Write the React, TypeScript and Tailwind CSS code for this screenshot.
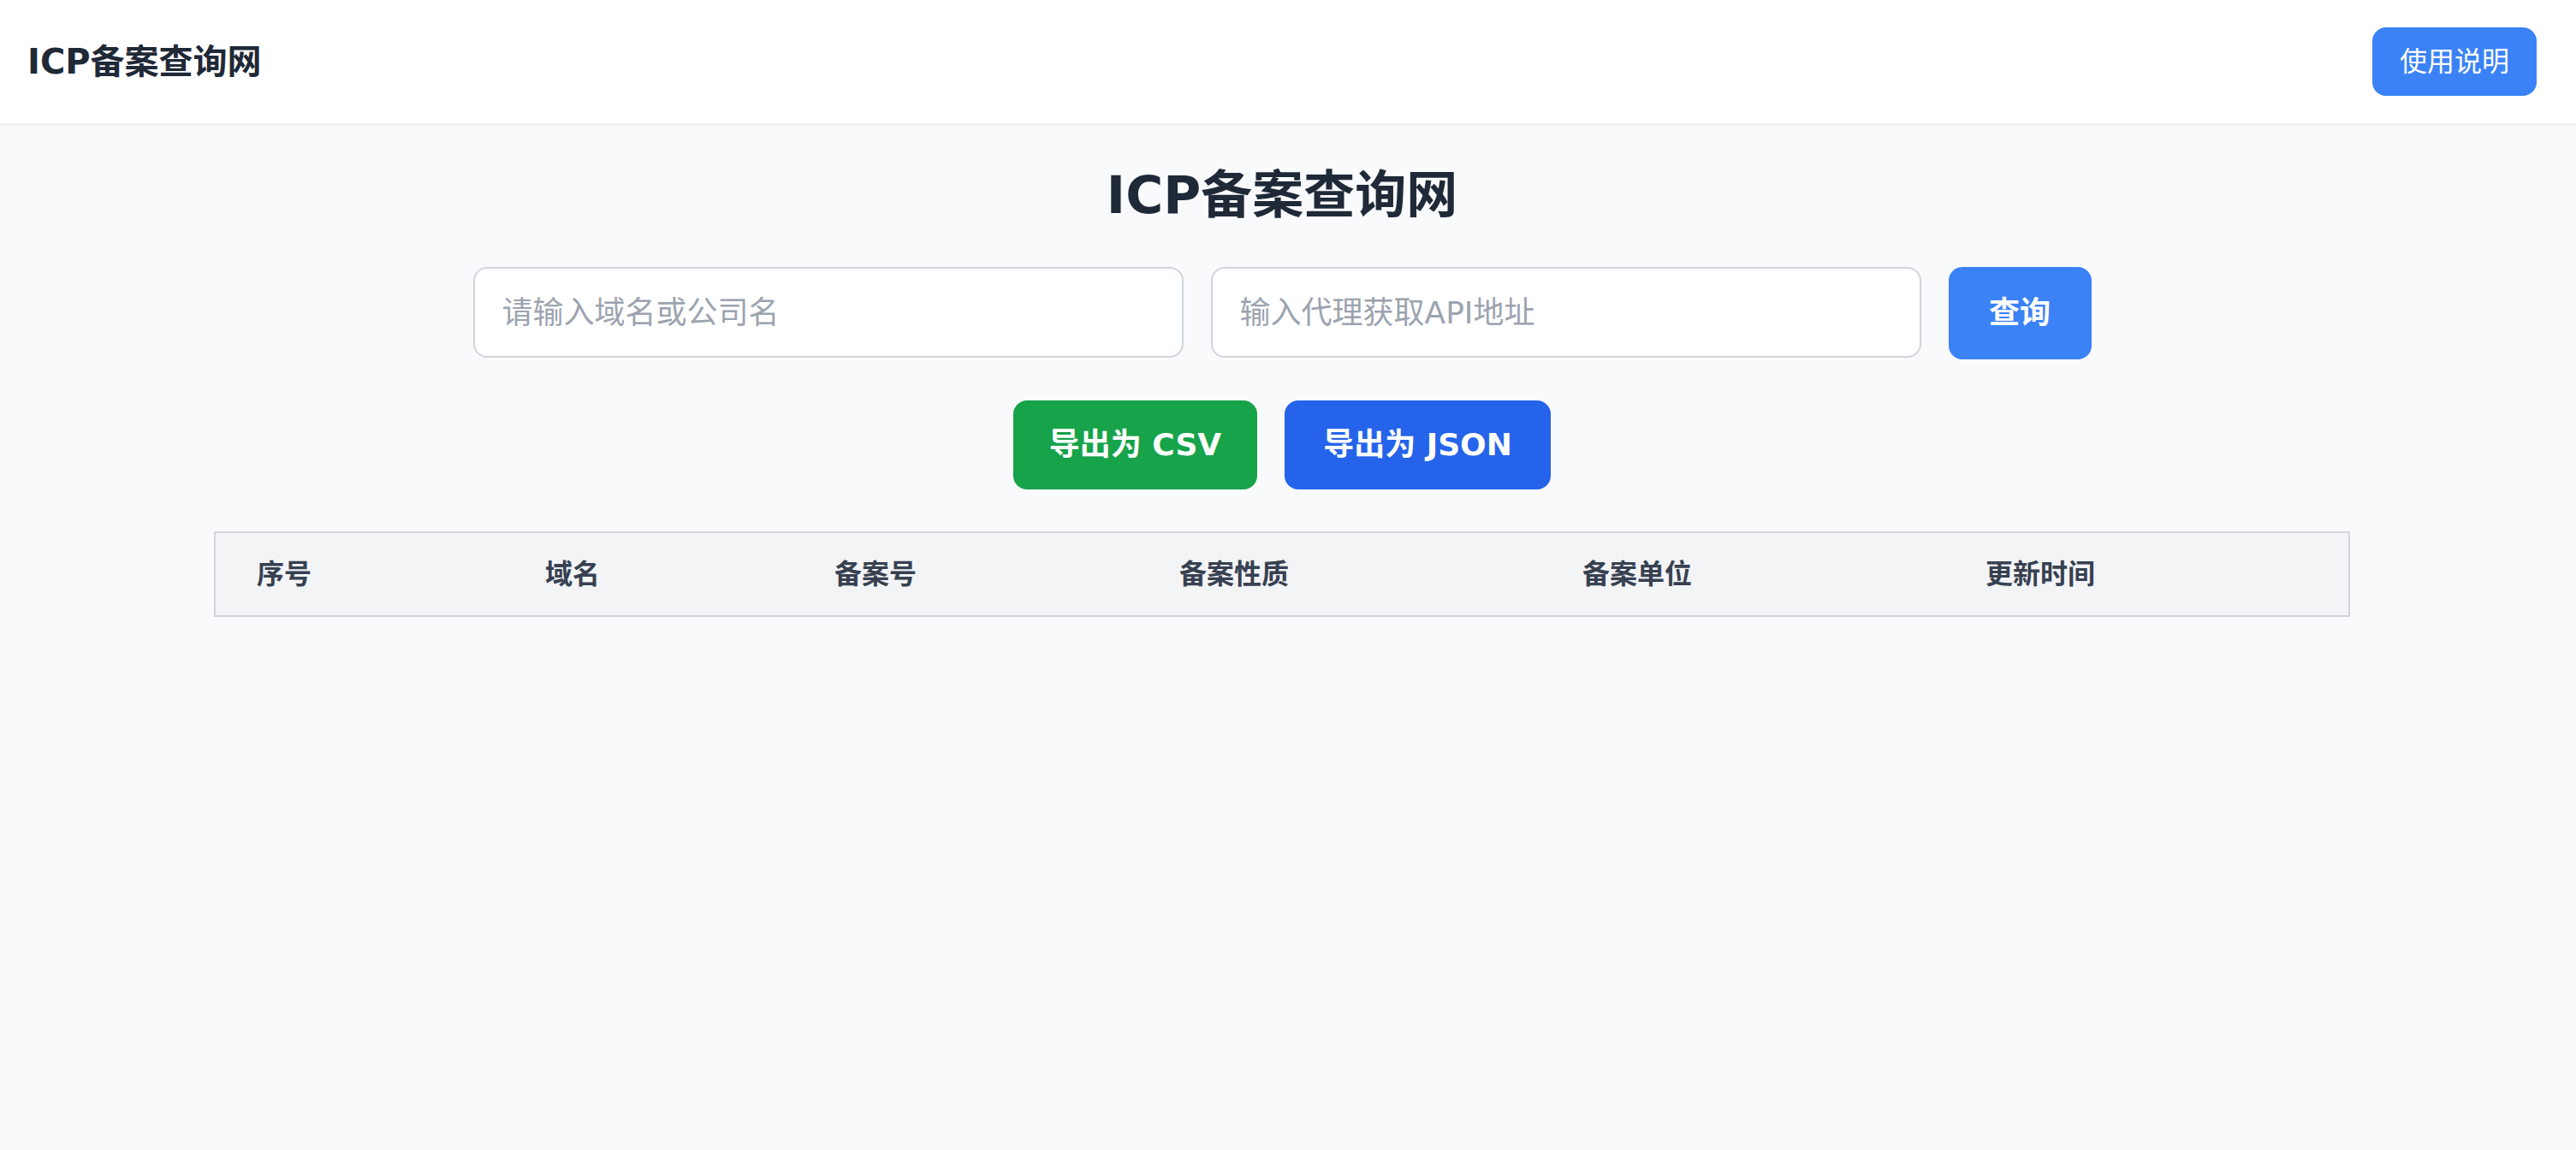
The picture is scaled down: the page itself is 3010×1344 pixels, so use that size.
import React from "react";

const FONT = { fontFamily: '"DejaVu Sans", "Noto Sans CJK SC", sans-serif' };

export default function App() {
  const cols = [
    { label: "序号", w: "w-[338px]" },
    { label: "域名", w: "w-[338px]" },
    { label: "备案号", w: "w-[403px]" },
    { label: "备案性质", w: "w-[471px]" },
    { label: "备案单位", w: "w-[471px]" },
    { label: "更新时间", w: "w-[473px]" },
  ];
  return (
    <div className="min-h-[1344px] bg-[#f9fafb]" style={FONT}>
      <header className="flex h-[144px] items-center justify-between bg-white pl-[32px] pr-[46px] shadow-[0_2px_4px_rgba(0,0,0,0.05)]">
        <h1 className="text-[40px] font-bold leading-[56px] text-[#1f2937]">ICP备案查询网</h1>
        <button className="h-[80px] rounded-[16px] bg-[#3b82f6] px-[32px] text-[32px] leading-[48px] text-white">
          使用说明
        </button>
      </header>
      <main className="pr-[14px]">
        <div className="mx-auto max-w-[2560px] px-[32px] pt-[48px]">
          <h2 className="mb-[48px] text-center text-[60px] font-bold leading-[72px] text-[#1f2937]">
            ICP备案查询网
          </h2>
          <div className="flex justify-center gap-[32px]">
            <input
              className="h-[106px] w-[830px] rounded-[16px] border-2 border-[#d1d5db] bg-white px-[32px] text-[36px] text-[#1f2937] outline-none placeholder:text-[#9ca3af]"
              placeholder="请输入域名或公司名"
              style={FONT}
            />
            <input
              className="h-[106px] w-[830px] rounded-[16px] border-2 border-[#d1d5db] bg-white px-[32px] text-[36px] text-[#1f2937] outline-none placeholder:text-[#9ca3af]"
              placeholder="输入代理获取API地址"
              style={FONT}
            />
            <button className="h-[108px] w-[167px] rounded-[16px] bg-[#3b82f6] text-[36px] font-bold text-white">
              查询
            </button>
          </div>
          <div className="mt-[48px] flex justify-center gap-[32px]">
            <button className="h-[104px] w-[285px] rounded-[16px] bg-[#16a34a] text-[36px] font-bold leading-[56px] text-white">
              导出为 CSV
            </button>
            <button className="h-[104px] w-[311px] rounded-[16px] bg-[#2563eb] text-[36px] font-bold leading-[56px] text-white">
              导出为 JSON
            </button>
          </div>
          <table className="mt-[49px] w-full table-fixed border-collapse border-2 border-[#d1d5db]">
            <thead className="bg-[#f3f4f6]">
              <tr>
                {cols.map((c) => (
                  <th
                    key={c.label}
                    className={`${c.w} px-[48px] py-[24px] text-left text-[32px] font-bold leading-[48px] text-[#374151]`}
                  >
                    {c.label}
                  </th>
                ))}
              </tr>
            </thead>
            <tbody></tbody>
          </table>
        </div>
      </main>
    </div>
  );
}
